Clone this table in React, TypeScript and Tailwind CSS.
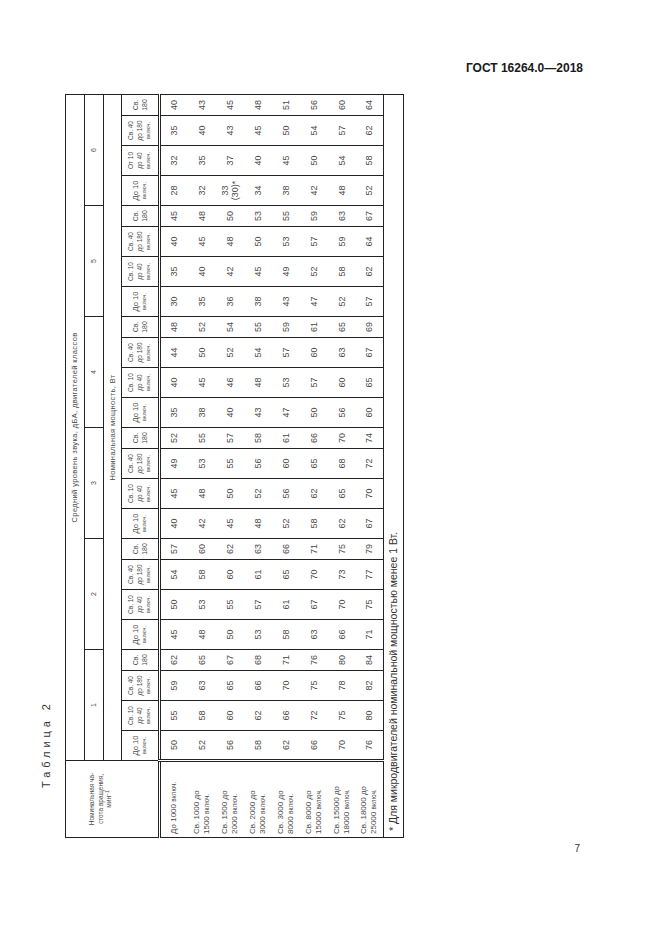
import React from 'react'

const CLASSES = [1, 2, 3, 4, 5, 6]

const ROWS: { a: string; b?: string; v: string[] }[] = [
  { a: 'До 1000', v: ['50', '55', '59', '62', '45', '50', '54', '57', '40', '45', '49', '52', '35', '40', '44', '48', '30', '35', '40', '45', '28', '32', '35', '40'] },
  { a: 'Св. 1000 до', b: '1500', v: ['52', '58', '63', '65', '48', '53', '58', '60', '42', '48', '53', '55', '38', '45', '50', '52', '35', '40', '45', '48', '32', '35', '40', '43'] },
  { a: 'Св. 1500 до', b: '2000', v: ['56', '60', '65', '67', '50', '55', '60', '62', '45', '50', '55', '57', '40', '46', '52', '54', '36', '42', '48', '50', '33*', '37', '43', '45'] },
  { a: 'Св. 2000 до', b: '3000', v: ['58', '62', '66', '68', '53', '57', '61', '63', '48', '52', '56', '58', '43', '48', '54', '55', '38', '45', '50', '53', '34', '40', '45', '48'] },
  { a: 'Св. 3000 до', b: '8000', v: ['62', '66', '70', '71', '58', '61', '65', '66', '52', '56', '60', '61', '47', '53', '57', '59', '43', '49', '53', '55', '38', '45', '50', '51'] },
  { a: 'Св. 8000 до', b: '15000', v: ['66', '72', '75', '76', '63', '67', '70', '71', '58', '62', '65', '66', '50', '57', '60', '61', '47', '52', '57', '59', '42', '50', '54', '56'] },
  { a: 'Св. 15000 до', b: '18000', v: ['70', '75', '78', '80', '66', '70', '73', '75', '62', '65', '68', '70', '56', '60', '63', '65', '52', '58', '59', '63', '48', '54', '57', '60'] },
  { a: 'Св. 18000 до', b: '25000', v: ['76', '80', '82', '84', '71', '75', '77', '79', '67', '70', '72', '74', '60', '65', '67', '69', '57', '62', '64', '67', '52', '58', '62', '64'] },
]

const SUB_WIDTHS = ['w-[30px]', 'w-[30px]', 'w-[30px]', 'w-[21px]']

function SubHead({ idx, cls }: { idx: number; cls: number }) {
  if (idx === 0)
    return (
      <div className="leading-[9px]">
        <div className="text-[7.5px]">До 10</div>
        <div className="text-[5.5px]">включ.</div>
      </div>
    )
  if (idx === 3)
    return (
      <div className="text-[7px] leading-[9px]">
        <div>Св.</div>
        <div>180</div>
      </div>
    )
  return (
    <div className="text-[6.5px] leading-[8.5px]">
      <div>{idx === 1 ? (cls === 6 ? 'От 10' : 'Св. 10') : 'Св. 40'}</div>
      <div>{idx === 1 ? 'до 40' : 'до 180'}</div>
      <div className="text-[5.5px]">включ.</div>
    </div>
  )
}

export default function App() {
  return (
    <div className="relative h-[935px] w-[661px] bg-white font-['Liberation_Sans',Arial,sans-serif] text-[#4a4a4a]">
      <div className="flex justify-end pr-[78px] pt-[61px] text-[12px] font-bold leading-[14px] text-[#1a1a1a]">
        ГОСТ 16264.0—2018
      </div>

      <div className="ml-[30px] mt-[19px] h-[744px] w-[372px]">
        <div className="h-[372px] w-[744px] origin-top-left [transform:translateY(744px)_rotate(-90deg)]">
          <div className="h-[35px] pl-[50px] pt-[9px] text-[11px] leading-[14px] tracking-[0.36em] text-[#333]">
            Таблица 2
          </div>
          <table className="w-[743px] table-fixed border-collapse border border-[#222]">
            <colgroup>
              <col className="w-[77px]" />
              {CLASSES.map((c) => SUB_WIDTHS.map((w, i) => <col key={`${c}-${i}`} className={w} />))}
            </colgroup>
            <thead>
              <tr className="h-[19px]">
                <th
                  rowSpan={4}
                  className="border border-[#222] px-[3px] pt-[22px] align-top text-[6.5px] font-normal leading-[8.5px]"
                >
                  Номинальная ча-
                  <br />
                  стота вращения,
                  <br />
                  мин<sup className="text-[5px]">−1</sup>
                </th>
                <th colSpan={24} className="border border-[#222] text-[7.5px] font-normal tracking-[0.05em]">
                  Средний уровень звука, дБА, двигателей классов
                </th>
              </tr>
              <tr className="h-[19px]">
                {CLASSES.map((c) => (
                  <th key={c} colSpan={4} className="border border-[#222] text-[7px] font-normal">
                    {c}
                  </th>
                ))}
              </tr>
              <tr className="h-[18px]">
                <th colSpan={24} className="border border-[#222] text-[7.5px] font-normal tracking-[0.05em]">
                  Номинальная мощность, Вт
                </th>
              </tr>
              <tr className="h-[38px] border-b-[3px] border-double border-[#222]">
                {CLASSES.map((c) =>
                  [0, 1, 2, 3].map((i) => (
                    <th key={`${c}-${i}`} className="border-x border-[#222] p-0 font-normal">
                      <SubHead idx={i} cls={c} />
                    </th>
                  ))
                )}
              </tr>
            </thead>
            <tbody>
              {ROWS.map((r, ri) => (
                <tr key={ri} className="h-[28px]">
                  <td className="border-r-[3px] border-double border-[#222] pl-[3px] text-left text-[8px] leading-[10px]">
                    {r.b ? (
                      <>
                        <div>{r.a}</div>
                        <div>
                          {r.b} <span className="text-[6.5px]">включ.</span>
                        </div>
                      </>
                    ) : (
                      <div>
                        {r.a} <span className="text-[6.5px]">включ.</span>
                      </div>
                    )}
                  </td>
                  {r.v.map((v, vi) => (
                    <td key={vi} className="border-x border-[#222] p-0 text-center text-[9px] leading-[10px]">
                      {v === '33*' ? (
                        <>
                          <div>33</div>
                          <div>(30)*</div>
                        </>
                      ) : (
                        v
                      )}
                    </td>
                  ))}
                </tr>
              ))}
              <tr className="h-[20px] border-t border-[#222]">
                <td colSpan={25} className="pl-[6px] text-left text-[10.5px] text-[#333]">
                  * Для микродвигателей номинальной мощностью менее 1 Вт.
                </td>
              </tr>
            </tbody>
          </table>
        </div>
      </div>

      <div className="mt-[5px] flex justify-end pr-[81px] text-[10px] leading-[12px] text-[#333]">7</div>
    </div>
  )
}
